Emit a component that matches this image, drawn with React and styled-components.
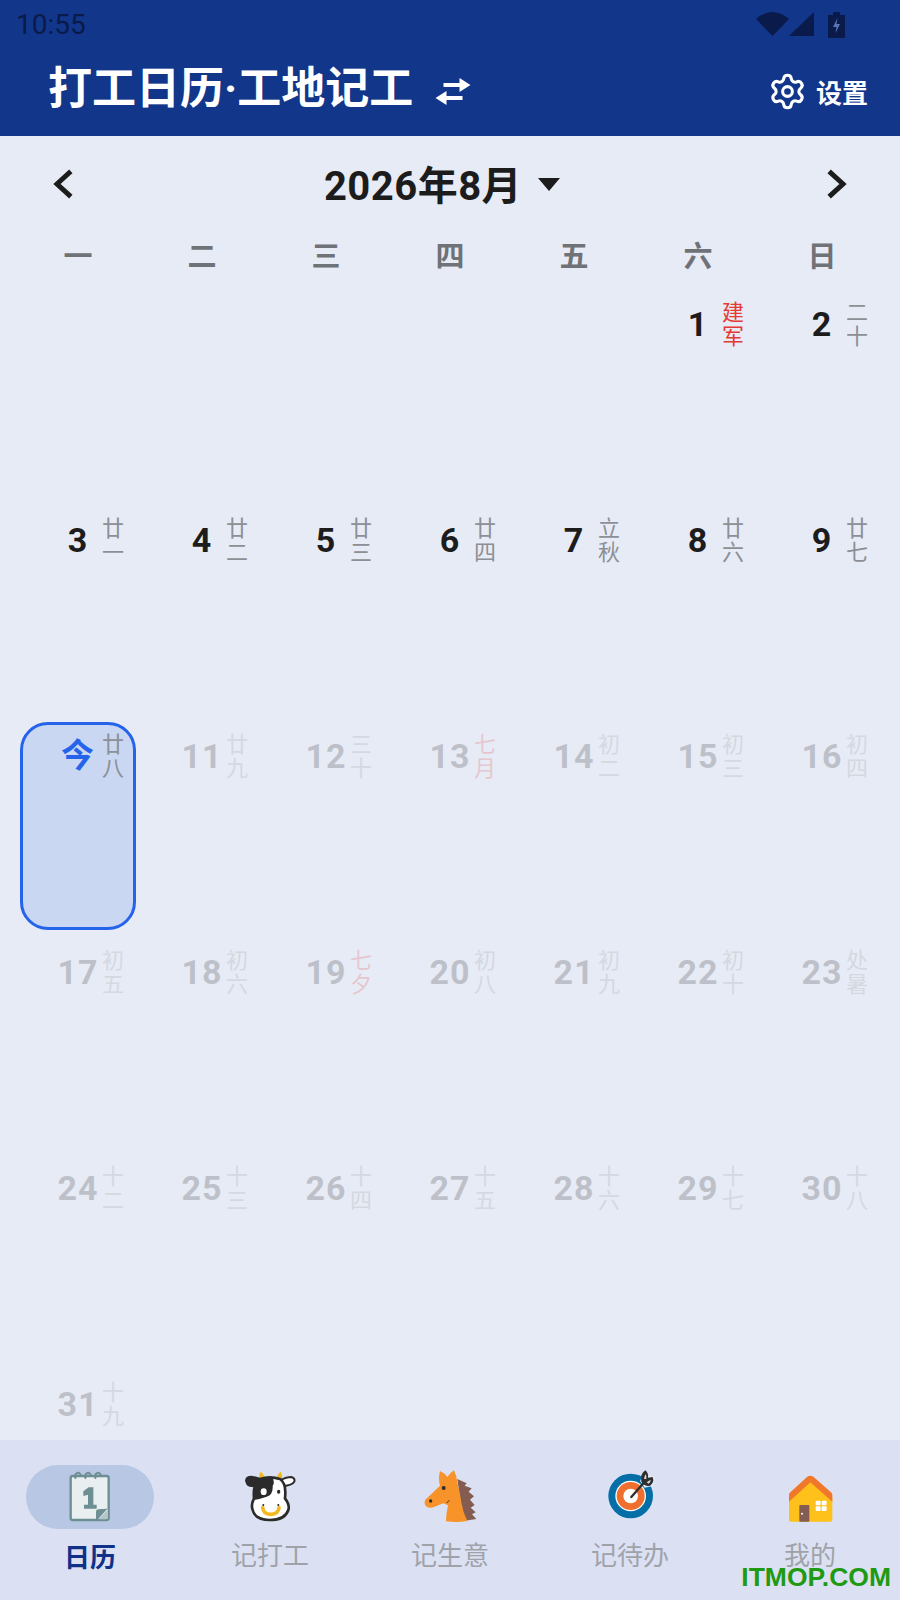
import React from "react";
import styled, { createGlobalStyle } from "styled-components";
import { Settings } from "lucide-react";

const Global = createGlobalStyle`
  html, body { margin: 0; padding: 0; background: #e7ebf5; }
  * { box-sizing: border-box; }
  body { font-family: Roboto, "Noto Sans CJK SC", sans-serif; }
`;

const Page = styled.div`
  position: relative;
  width: 900px;
  height: 1600px;
  display: flex;
  flex-direction: column;
  overflow: hidden;
  background: #e7ebf5;
`;
const Header = styled.header`
  flex: none;
  height: 136px;
  background: #11368a;
  color: #fff;
  display: flex;
  flex-direction: column;
`;
const StatusBar = styled.div`
  height: 50px;
  padding: 0 55px 0 16px;
  display: flex;
  align-items: center;
  justify-content: space-between;
  color: #0a1a4a;
`;
const Clock = styled.span`
  font-size: 28px;
  line-height: 52px;
`;
const StatusIcons = styled.div`
  display: flex;
  align-items: flex-start;
  height: 26px;
`;
const BatteryIcon = styled.svg`
  margin-left: 14px;
`;
const Toolbar = styled.div`
  flex: 1;
  padding: 0 32px 8px 48px;
  display: flex;
  align-items: center;
  justify-content: space-between;
`;
const TitleGroup = styled.div`
  display: flex;
  align-items: center;
  gap: 22px;
`;
const Title = styled.h1`
  margin: 0;
  font-size: 44px;
  line-height: 60px;
  font-weight: 700;
`;
const SwapIcon = styled.svg`
  margin-top: 5px;
`;
const SettingsLink = styled.div`
  margin-top: 5px;
  display: flex;
  align-items: center;
  gap: 9px;
  font-size: 26px;
  font-weight: 700;
`;
const Main = styled.main`
  flex: 1;
  min-height: 0;
  overflow: hidden;
`;
const MonthNav = styled.div`
  height: 96px;
  padding: 0 52px;
  display: flex;
  align-items: center;
  justify-content: space-between;
`;
const MonthTitle = styled.div`
  display: flex;
  align-items: center;
  gap: 16px;
  margin: 0 16px 2px 0;
  font-size: 40px;
  letter-spacing: 0.5px;
  font-weight: 700;
  color: #1c1c1c;
`;
const Caret = styled.svg`
  margin-top: 2px;
`;
const Weekdays = styled.div`
  height: 44px;
  margin-bottom: 10px;
  padding: 0 16px;
  display: grid;
  grid-template-columns: repeat(7, 124px);
  align-items: center;
  justify-items: center;
  font-size: 29px;
  font-weight: 700;
  color: #6f7277;
`;
const DayGrid = styled.div`
  padding: 0 16px;
  display: grid;
  grid-template-columns: repeat(7, 124px);
  grid-auto-rows: 216px;
`;
const Cell = styled.div`
  margin: 4px;
  padding: 8px 9px 0 0;
  border: 3px solid ${(p) => (p.$today ? "#2563eb" : "transparent")};
  border-radius: 28px;
  background: ${(p) => (p.$today ? "#c9d7f2" : "transparent")};
  display: flex;
  justify-content: flex-end;
  align-items: flex-start;
  gap: 2px;
  opacity: ${(p) => (p.$dim ? 0.2 : 1)};
`;
const DayNumber = styled.span`
  width: 44px;
  text-align: center;
  white-space: nowrap;
  font-size: ${(p) => (p.$today ? "33px" : "34px")};
  letter-spacing: 1px;
  line-height: 46px;
  font-weight: 700;
  color: ${(p) => (p.$today ? "#2563eb" : "#1c1c1c")};
`;
const Lunar = styled.span`
  width: 22px;
  font-size: 22px;
  line-height: 24px;
  color: ${(p) => (p.$red ? "#e53935" : "#8c8f95")};
`;
const TabBar = styled.nav`
  flex: none;
  height: 160px;
  padding-top: 25px;
  background: #dbe1f3;
  display: grid;
  grid-template-columns: repeat(5, 180px);
`;
const Tab = styled.div`
  display: flex;
  flex-direction: column;
  align-items: center;
`;
const IconPill = styled.div`
  width: 128px;
  height: 64px;
  border-radius: 32px;
  background: ${(p) => (p.$active ? "#b8c7e3" : "transparent")};
  display: flex;
  align-items: center;
  justify-content: center;
`;
const TabLabel = styled.span`
  margin-top: ${(p) => (p.$active ? "12px" : "10px")};
  font-size: 26px;
  line-height: 34px;
  font-weight: ${(p) => (p.$active ? 700 : 400)};
  color: ${(p) => (p.$active ? "#103189" : "#9fa3a9")};
`;
const Watermark = styled.div`
  position: absolute;
  right: 9px;
  bottom: 10px;
  font-family: "Liberation Sans", sans-serif;
  font-size: 26.5px;
  line-height: 26px;
  font-weight: 700;
  color: #1f9a12;
`;

const weekdays = ["一", "二", "三", "四", "五", "六", "日"];
const lunar = ["建军","二十","廿一","廿二","廿三","廿四","立秋","廿六","廿七","廿八","廿九","三十","七月","初二","初三","初四","初五","初六","七夕","初八","初九","初十","处暑","十二","十三","十四","十五","十六","十七","十八","十九"];
const redDays = [1, 13, 19];

const Chevron = ({ right }) => (
  <svg width="24" height="32" viewBox="0 0 24 32" fill="none" stroke="#1c1c1c" strokeWidth="5" strokeLinecap="square">
    <polyline points={right ? "7,5 19,16 7,27" : "17,5 5,16 17,27"} />
  </svg>
);

const CalendarIcon = () => (
  <svg width="60" height="60" viewBox="180 111 180 180">
    <rect x="212" y="138" width="114" height="132" rx="6" fill="#e9eef1" stroke="#6d8e92" strokeWidth="7" />
    <g fill="none" stroke="#6d8e92" strokeWidth="6">
      <path d="M228 146a9 10 0 1 1 15 -6" />
      <path d="M258 146a9 10 0 1 1 15 -6" />
      <path d="M288 146a9 10 0 1 1 15 -6" />
    </g>
    <path d="M250 184l16-12h14v52h10v12h-38v-12h12v-30l-14 4z" fill="#6d8e92" />
    <path d="M288 268v-22q0-8 8-8l26-2-30 34z" fill="#6d8e92" />
    <path d="M296 268l28-30v24q0 6-6 6z" fill="#b5c5c8" />
  </svg>
);
const CowIcon = () => (
  <svg width="60" height="60" viewBox="30 36 180 180">
    <path d="M88 74q-2-16 4-24 10 6 14 20zM138 70q4-14 14-20 6 8 4 24z" fill="#f4b91e" />
    <path d="M45 78Q45 62 65 62 85 65 100 75L90 95Q60 100 50 90z" fill="#2b2b2b" />
    <path d="M150 76q20-10 34-10 12 4 9 14-6 12-40 14z" fill="#fff" stroke="#2b2b2b" strokeWidth="6" />
    <path d="M72 130Q68 85 90 72 120 62 150 72 170 85 165 130 180 150 175 165 165 195 120 195 75 195 68 165 62 150 72 130z" fill="#fff" stroke="#2b2b2b" strokeWidth="8" />
    <path d="M72 135Q66 85 90 72 105 65 128 68 135 85 128 92 130 120 110 125 90 132 72 135z" fill="#2b2b2b" />
    <ellipse cx="101" cy="110" rx="9" ry="10" fill="#fff" />
    <ellipse cx="146" cy="110" rx="5" ry="6" fill="#2b2b2b" />
    <path d="M98 158Q100 178 122 178 145 178 147 158" fill="none" stroke="#f4b91e" strokeWidth="11" strokeLinecap="round" />
    <circle cx="100" cy="150" r="3" fill="#2b2b2b" />
    <circle cx="145" cy="150" r="3" fill="#2b2b2b" />
  </svg>
);
const HorseIcon = () => (
  <svg width="60" height="60" viewBox="570 36 180 180">
    <path d="M682 72L710 85 704 92 725 100 716 110 732 124 720 134 734 150 722 158 737 172 726 178 739 192 700 198z" fill="#855c52" />
    <path d="M586 134l44-42q-6-24 0-44 14 6 22 18 8-12 20-20 8 16 10 36 8 32 12 60 4 28 18 56-30 6-64 1 0-22 6-48l-14-6-26 10q-14 6-24 0-10-8-4-21z" fill="#f79329" />
    <circle cx="641" cy="99" r="6" fill="#2d2d2d" />
    <circle cx="602" cy="138" r="5" fill="#2d2d2d" />
    <path d="M650 144l8-8" stroke="#2d2d2d" strokeWidth="3" fill="none" />
  </svg>
);
const TargetIcon = () => (
  <svg width="60" height="60" viewBox="30 36 180 180">
    <circle cx="122" cy="123" r="67" fill="#046ea6" />
    <circle cx="122" cy="123" r="46" fill="#fff" />
    <circle cx="122" cy="123" r="42" fill="#ef6f2e" />
    <circle cx="122" cy="123" r="22" fill="#fff" />
    <path d="M160 58l34 8-4 26-26 6-14-20z" fill="#e7ebf5" />
    <path d="M124 126l44-50" stroke="#2f2f2f" strokeWidth="7" strokeLinecap="round" />
    <path d="M154 80q-4-24 12-34 10 8 8 22l14-2q6 16-8 26-10 4-20-4z" fill="#2f2f2f" />
    <path d="M162 72q2-10 5-14 4 6 2 14zM170 82q8-6 12-8 0 8-6 12z" fill="#d9d9d9" />
  </svg>
);
const HouseIcon = () => (
  <svg width="60" height="60" viewBox="570 36 180 180">
    <path d="M597 128l64-60 66 60v66q0 6-6 6H603q-6 0-6-6z" fill="#fec01a" />
    <path d="M597 120q0-4 4-8l50-46q10-8 20 0l52 46q4 4 4 8v20l-66-58-64 58z" fill="#f1772a" />
    <rect x="628" y="150" width="30" height="50" rx="2" fill="#855c52" />
    <circle cx="636" cy="176" r="3" fill="#fff" />
    <g fill="#fff">
      <rect x="677" y="137" width="15" height="14" rx="3" />
      <rect x="695" y="137" width="15" height="14" rx="3" />
      <rect x="677" y="154" width="15" height="14" rx="3" />
      <rect x="695" y="154" width="15" height="14" rx="3" />
    </g>
  </svg>
);

const tabs = [
  { label: "日历", icon: <CalendarIcon />, active: true },
  { label: "记打工", icon: <CowIcon /> },
  { label: "记生意", icon: <HorseIcon /> },
  { label: "记待办", icon: <TargetIcon /> },
  { label: "我的", icon: <HouseIcon /> },
];

export default function App() {
  return (
    <Page>
      <Global />
      <Header>
        <StatusBar>
          <Clock>10:55</Clock>
          <StatusIcons>
            <svg width="33" height="24" viewBox="0 0 33 24" fill="currentColor">
              <path d="M0 7Q16.500-7 33 7L16.500 24z" />
            </svg>
            <svg width="25" height="24" viewBox="0 0 25 24" fill="currentColor">
              <path d="M25 0v24H0z" />
            </svg>
            <BatteryIcon width="17" height="26" viewBox="0 0 17 26">
              <path d="M5 0h7v3h5v23H0V3h5z" fill="currentColor" />
              <path d="M9.500 6L5 15h3.500l-1 6L12 12H8.500z" fill="#5a74b5" />
            </BatteryIcon>
          </StatusIcons>
        </StatusBar>
        <Toolbar>
          <TitleGroup>
            <Title>打工日历·工地记工</Title>
            <SwapIcon width="36" height="27" viewBox="0 0 35 27" fill="#fff">
              <path d="M8 5h16V0l11 7-11 7V9H8z" />
              <path d="M27 18H11v-5L0 20l11 7v-5h16z" />
            </SwapIcon>
          </TitleGroup>
          <SettingsLink>
            <Settings size={39} strokeWidth={1.9} color="#fff" />
            设置
          </SettingsLink>
        </Toolbar>
      </Header>
      <Main>
        <MonthNav>
          <Chevron />
          <MonthTitle>
            2026年8月
            <Caret width="22" height="13" viewBox="0 0 22 13" fill="#1c1c1c">
              <path d="M0 0h22L11 13z" />
            </Caret>
          </MonthTitle>
          <Chevron right />
        </MonthNav>
        <Weekdays>
          {weekdays.map((d) => (
            <span key={d}>{d}</span>
          ))}
        </Weekdays>
        <DayGrid>
          {Array.from({ length: 5 }, (_, i) => (
            <div key={`blank-${i}`} />
          ))}
          {lunar.map((text, i) => {
            const day = i + 1;
            const today = day === 10;
            return (
              <Cell key={day} $today={today} $dim={day > 10}>
                <DayNumber $today={today}>{today ? "今" : day}</DayNumber>
                <Lunar $red={redDays.includes(day)}>{text}</Lunar>
              </Cell>
            );
          })}
        </DayGrid>
      </Main>
      <TabBar>
        {tabs.map((t) => (
          <Tab key={t.label}>
            <IconPill $active={t.active}>{t.icon}</IconPill>
            <TabLabel $active={t.active}>{t.label}</TabLabel>
          </Tab>
        ))}
      </TabBar>
      <Watermark>ITMOP.COM</Watermark>
    </Page>
  );
}
